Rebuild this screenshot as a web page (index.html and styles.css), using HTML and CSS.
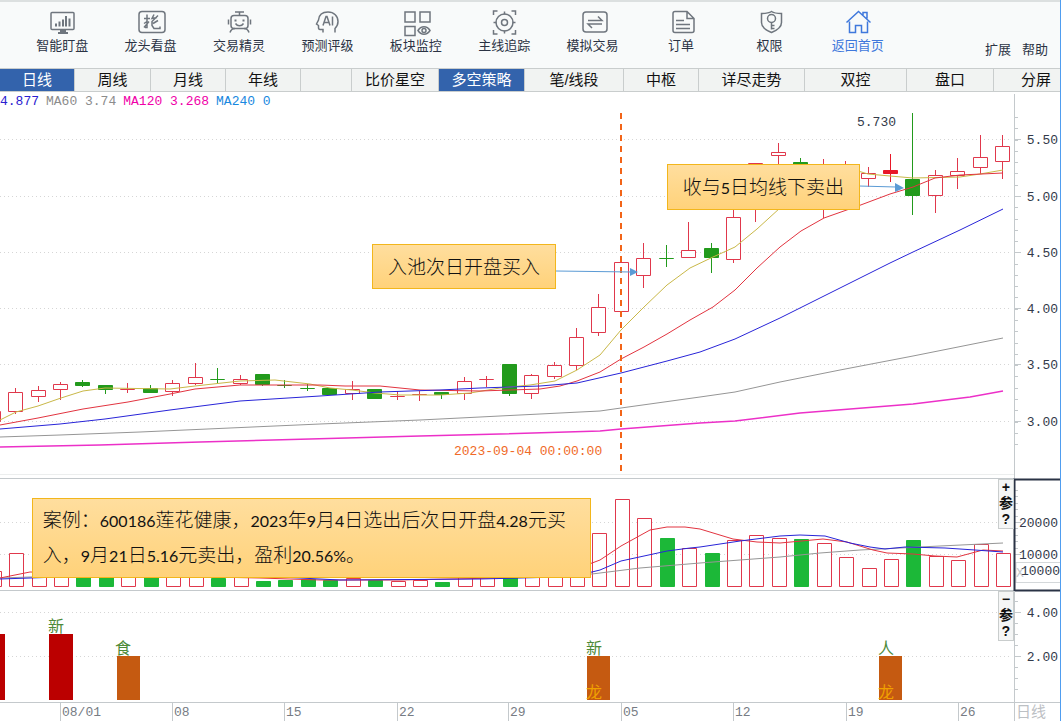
FILE: index.html
```html
<!DOCTYPE html>
<html lang="zh-CN">
<head>
<meta charset="utf-8">
<meta name="viewport" content="width=device-width, initial-scale=1">
<title>多空策略</title>
<link rel="stylesheet" href="styles.css">
</head>
<body>
<div class="app">
  <header class="toolbar">
    <nav class="tools">
      <button class="tool" type="button">
        <svg class="icon" viewBox="0 0 26 26"><rect x="2" y="3" width="23" height="17" rx="1"/><path d="M9 23.500h10M11 21.500h6" stroke-width="2"/><path d="M7 14v3M10.500 12v5M14 10v7M17 6.500V17M20.500 9v8" stroke-width="2"/></svg>
        智能盯盘
      </button>
      <button class="tool" type="button">
        <svg class="icon" viewBox="0 0 26 26"><rect x="1" y="2" width="26" height="21" rx="3"/><path d="M6 9h6M9 5v7l-3 2M11 12l-5 6M9 13v5H7M16 5l-2 4 5-1M20 6l-6 6v4l2 3h6v-2M15 14l5-3"/></svg>
        龙头看盘
      </button>
      <button class="tool" type="button">
        <svg class="icon" viewBox="0 0 26 26"><rect x="5" y="6" width="17" height="13" rx="3"/><path d="M9 2.500h9M13.500 2.500V6M2.500 10v5M24.500 10v5M4 23c1-3 3-4 5-4M23 23c-1-3-3-4-5-4M9.500 14c2 3 6 3 8 0"/><path d="M9.500 10v2M17.500 10v2" stroke-width="2"/></svg>
        交易精灵
      </button>
      <button class="tool" type="button">
        <svg class="icon" viewBox="0 0 26 26"><path d="M9 23v-3H6c-1 0-1.500-1-1.500-2v-2L2.500 14.500l2-4C5 5 9 2.500 14 2.500c6 0 10 4 10 9.500 0 3-1 5-3 7v4"/><path d="M9 16l3-9h1l3 9M10 13h5M18.500 7v9"/></svg>
        预测评级
      </button>
      <button class="tool" type="button">
        <svg class="icon" viewBox="0 0 26 26"><path d="M2 2.500h10v10H2zM17 2.500h10v10H17zM2 17h10v9H2zM15 21c3-5 9-5 12 0-3 5-9 5-12 0z"/><circle cx="21" cy="21" r="2"/></svg>
        板块监控
      </button>
      <button class="tool" type="button">
        <svg class="icon" viewBox="0 0 26 26"><circle cx="13.500" cy="13" r="8.500"/><circle cx="13.500" cy="13" r="3"/><path d="M13.500 2v3M13.500 21v3M2.500 13h3M21.500 13h3M2.500 5.500v-4h4M20.500 1.500h4v4M24.500 20.500v4h-4M6.500 24.500h-4v-4"/></svg>
        主线追踪
      </button>
      <button class="tool" type="button">
        <svg class="icon" viewBox="0 0 26 26"><rect x="3" y="2.500" width="24" height="20" rx="3"/><path d="M8 11h14l-4-4M22 14.500H8l4 4"/></svg>
        模拟交易
      </button>
      <button class="tool" type="button">
        <svg class="icon" viewBox="0 0 26 26"><path d="M7 2h12l7 7v12c0 1-1 2-2 2H7c-1 0-2-1-2-2V4c0-1 1-2 2-2zM19 2v7h7M8 11h8M8 15h14M8 19h14"/></svg>
        订单
      </button>
      <button class="tool" type="button">
        <svg class="icon" viewBox="0 0 26 26"><path d="M15.500 2c3 2 6 2 10 2v9c0 5-5 8-10 10-5-2-10-5-10-10V4c4 0 7 0 10-2z"/><circle cx="15.500" cy="9" r="4"/><path d="M15.500 13v7M15.500 16h3M15.500 19h3"/></svg>
        权限
      </button>
      <a class="tool tool-home" href="#">
        <svg class="icon" viewBox="0 0 26 26"><path d="M1.500 13L13.500 2l12 11M4.500 12v11h6v-7h6v7h6V12M18 5.500V3h4v6"/></svg>
        返回首页
      </a>
    </nav>
    <div class="extras">
      <button type="button">扩展</button>
      <button type="button">帮助</button>
    </div>
  </header>

  <nav class="tabs">
    <button class="tab active" type="button">日线</button>
    <button class="tab" type="button">周线</button>
    <button class="tab" type="button">月线</button>
    <button class="tab" type="button">年线</button>
    <span class="tab"></span>
    <button class="tab" type="button">比价星空</button>
    <button class="tab active" type="button">多空策略</button>
    <button class="tab" type="button">笔/线段</button>
    <button class="tab" type="button">中枢</button>
    <button class="tab" type="button">详尽走势</button>
    <button class="tab" type="button">双控</button>
    <button class="tab" type="button">盘口</button>
    <button class="tab tab-end" type="button">分屏</button>
  </nav>

  <main>
    <div class="legend">
      <span class="c-ma20">4.877</span>
      <span class="c-ma60">MA60 3.74</span>
      <span class="c-ma120">MA120 3.268</span>
      <span class="c-ma240">MA240 0</span>
    </div>

    <section class="panel price">
      <svg class="plot" viewBox="0 110 1060 369">
        <g id="price-grid"></g>
        <g id="candles"></g>
        <polyline class="line ma5" points="0,420 16,412 38,406 61,398 83,391 105,388 170,389 195,386 240,381 275,380 310,384 330,388 352,390 375,393 400,395 440,395 470,393 500,388 530,385 555,381 577,370 600,355 621,330 644,307 667,285 690,268 713,257 735,247 757,229 780,208 800,190 824,178 858,171 868,174 890,176 913,178 960,177 980,174 1003,170"/>
        <polyline class="line ma10" points="0,425 38,418 83,409 128,402 170,394 195,389 240,385 320,385 345,386 380,386 420,390 480,391 540,389 560,386 577,381 600,372 621,359 644,347 667,334 690,320 713,307 735,290 757,268 780,247 801,231 824,218 858,206 890,194 913,187 935,178 960,175 1003,173"/>
        <polyline class="line ma20" points="0,429 60,424 105,419 170,410 240,401 320,396 380,392 440,390 480,388 540,386 577,383 621,373 667,361 700,352 735,339 780,318 824,296 868,274 890,263 913,252 960,230 1003,209"/>
        <polyline class="line ma60" points="0,437 60,435 140,432 230,428 320,424 420,420 480,417 540,414 600,411 621,408 700,397 735,392 780,382 840,370 913,356 1003,338"/>
        <polyline class="line ma120" points="0,447 100,445 200,442 310,439 420,436 500,434 600,431 621,429 700,423 735,421 800,413 913,404 970,397 1003,391"/>
        <path class="marker" d="M621 113V472"/>
        <path class="arrow" d="M556 271L632 272M859 186L896 187"/>
        <path class="arrow-head" d="M630 268v8l8-4zM895 183v9l9-4z"/>
        <text class="num" x="857" y="126">5.730</text>
        <text class="num date" x="454" y="455">2023-09-04 00:00:00</text>
        <path class="edge" d="M1014.500 94V479M0 478.500H1014"/>
        <path class="edge faint" d="M0 474.500H1014"/>
      </svg>
      <div class="callout buy">入池次日开盘买入</div>
      <div class="callout sell">收与<span class="digits">5</span>日均线下卖出</div>
    </section>

    <section class="panel volume">
      <svg class="plot" viewBox="0 479 1060 112">
        <g id="volume-grid"></g>
        <g id="volumes"></g>
        <polyline class="line ma60" points="0,578 30,577 160,576 330,577 592,574 640,568 700,563 740,560 780,557 820,553 860,550 900,548 940,546 1003,543"/>
        <polyline class="line ma10" points="0,578 30,572 210,577 260,578 320,580 400,580 500,578 560,574 592,563 600,560 621,546 650,530 667,527 685,527 700,529 733,539 757,542 780,543 823,539 847,542 873,550 887,553 913,554 935,556 957,557 983,550 1003,551"/>
        <polyline class="line ma20" points="0,579 60,577 280,577 340,580 480,579 560,577 592,572 600,570 621,561 667,551 690,548 700,547 740,541 780,536 800,535 825,536 850,543 870,547 885,549 905,547 945,548 975,550 1003,552"/>
        <path class="edge" d="M0 590.500H1014"/>
        <rect class="unit-box" x="1016" y="562.500" width="46" height="20"/>
        <text class="num unit-x" x="1016" y="577">X</text>
        <text class="num" x="1021" y="575">10000</text>
        <rect class="axis-focus" x="1014.500" y="479.500" width="50" height="111"/>
      </svg>
      <div class="callout note">案例：<span class="digits">600186</span>莲花健康，<span class="digits">2023</span>年<span class="digits">9</span>月<span class="digits">4</span>日选出后次日开盘<span class="digits">4.28</span>元买入，<span class="digits">9</span>月<span class="digits">21</span>日<span class="digits">5.16</span>元卖出，盈利<span class="digits">20.56%</span>。</div>
      <div class="side">
        <button type="button">+</button>
        <button type="button">参</button>
        <button type="button">?</button>
      </div>
    </section>

    <section class="panel signal">
      <svg class="plot" viewBox="0 591 1060 112">
        <g id="signal-grid"></g>
        <path class="bar-red" d="M0 634h5v66H0zM49 634h24v66H49z"/>
        <path class="bar-orange" d="M117 656h23v44h-23zM587 656h23v44h-23zM879 656h23v44h-23z"/>
        <g class="tag">
          <text x="48" y="632">新</text>
          <text x="115" y="654">食</text>
          <text x="586" y="654">新</text>
          <text x="878" y="654">人</text>
        </g>
        <g class="tag dragon">
          <text x="586" y="698">龙</text>
          <text x="878" y="698">龙</text>
        </g>
        <path class="edge" d="M1014.500 591V703M0 702.500H1060"/>
      </svg>
      <div class="side">
        <button type="button">−</button>
        <button type="button">参</button>
        <button type="button">?</button>
      </div>
    </section>

    <svg class="plot" viewBox="0 703 1060 18">
      <g id="dates"></g>
      <path class="edge" d="M1014.500 703V721"/>
      <text class="period" x="1016" y="717">日线</text>
    </svg>
  </main>
</div>
<script src="chart.js"></script>
</body>
</html>
```

FILE: styles.css
```css
* { box-sizing: border-box; }

body {
  margin: 0;
  background: #fff;
  color: #2b3344;
  font-family: "Liberation Sans", "Noto Sans CJK SC", sans-serif;
}

button {
  margin: 0;
  padding: 0;
  border: 0;
  background: none;
  color: inherit;
  font: inherit;
}

.app {
  border-right: 1px solid #4f9df0;
  overflow: hidden;
}

/* Toolbar */
.toolbar {
  display: flex;
  height: 68px;
  padding-left: 18px;
  border-top: 2px solid #dce0e0;
  background: #f8fafa;
  font-size: 13px;
  line-height: 18px;
}

.tools {
  display: grid;
  flex: 1;
  grid-template-columns: repeat(10, 1fr);
}

.tool {
  display: flex;
  flex-direction: column;
  align-items: center;
  gap: 1px;
  padding-top: 7px;
  white-space: nowrap;
  text-decoration: none;
}

.tool-home { color: #3f78dc; }

.icon {
  width: 26px;
  height: 27px;
  overflow: visible;
  fill: none;
  stroke: #6f767e;
  stroke-width: 1.5;
}

.tool-home .icon { stroke: #3f78dc; }

.extras {
  display: flex;
  justify-content: flex-end;
  align-items: flex-start;
  gap: 11px;
  width: 158px;
  padding: 39px 12px 0 0;
}

/* Period and view tabs */
.tabs {
  display: grid;
  grid-template-columns: 75fr 76fr 75fr 75fr 51fr 87fr 86fr 99fr 75fr 106fr 102fr 87fr 66fr;
  height: 24px;
  border-top: 1px solid #c9cdcd;
  border-bottom: 1px solid #c9cdcd;
  background: #f1f3f2;
  color: #111;
  font-size: 15px;
  line-height: 22px;
}

.tab {
  border-right: 1px solid #c9cdcd;
  text-align: center;
  white-space: nowrap;
}

.tab.active {
  background: #3363ac;
  color: #fff;
}

.tab-end {
  padding-right: 9px;
  border-right: 0;
  text-align: right;
}

/* Moving average legend */
.legend {
  display: flex;
  gap: 7px;
  height: 18px;
  font: 13px/20px "Liberation Mono", monospace;
}

.c-ma20 { color: #2a20d0; }
.c-ma60 { color: #8c8c8c; }
.c-ma120 { color: #f000a8; }
.c-ma240 { color: #1888e0; }

/* Chart panels */
.panel { position: relative; }

.plot {
  display: block;
  width: 100%;
  overflow: visible;
}

.grid {
  fill: none;
  stroke: #d6d6d6;
  stroke-dasharray: 1 3;
}

.tick, .edge {
  fill: none;
  stroke: #c4c9cc;
}

.faint { stroke: #eceeee; }

.up {
  fill: #fff;
  stroke: #e0384c;
}

.up-solid {
  fill: #e81828;
  stroke: #e81828;
}

.down {
  fill: #229a1c;
  stroke: #229a1c;
}

.down-vol {
  fill: #1cb838;
  stroke: #1cb838;
}

.line {
  fill: none;
  stroke-width: 1;
}

.ma5 { stroke: #c9b848; }
.ma10 { stroke: #e23440; }
.ma20 { stroke: #2824d8; }
.ma60 { stroke: #969696; }

.ma120 {
  stroke: #ec30c8;
  stroke-width: 1.5;
}

.marker {
  stroke: #f26418;
  stroke-width: 2;
  stroke-dasharray: 6 5;
}

.arrow {
  fill: none;
  stroke: #5b9bd5;
}

.arrow-head { fill: #5b9bd5; }

.num {
  fill: #333a4a;
  font: 13px "Liberation Mono", monospace;
}

.date { fill: #f06a28; }
.day { fill: #777c84; }
.unit-x { fill: #c4c8cc; }

.unit-box {
  fill: #fff;
  stroke: #d4d8da;
}

.axis-focus {
  fill: none;
  stroke: #2a3345;
  stroke-width: 2;
}

.bar-red { fill: #bb0000; }
.bar-orange { fill: #c55a11; }

.tag {
  fill: #4c8a38;
  font: 16px "Noto Sans CJK SC", sans-serif;
}

.dragon { fill: #f0a000; }

.period {
  fill: #bcc0c4;
  font: 15px "Noto Sans CJK SC", sans-serif;
}

/* Notes over the chart */
.callout {
  position: absolute;
  border: 1px solid #f2b61c;
  background: linear-gradient(#ffde9e, #ffd27a);
  color: #111;
  font: 300 19px/34px Lato, "Noto Sans CJK SC", sans-serif;
  white-space: nowrap;
}

.digits {
  font-size: 16px;
  font-weight: 400;
}

.buy, .sell { padding: 5px 15px 4px; }

.buy {
  top: 36.3%;
  left: 35.1%;
}

.sell {
  top: 14.6%;
  left: 62.9%;
}

.note {
  top: 17%;
  left: 3%;
  width: 52.8%;
  padding: 4px 10px;
  white-space: normal;
}

.side {
  position: absolute;
  top: 0;
  right: 46px;
  display: grid;
  grid-template-rows: repeat(3, 16px);
  width: 16px;
  border: 1px solid #c9cdcd;
  background: #f5f6f6;
  color: #111;
  font: bold 14px/15px "Liberation Mono", "Noto Sans CJK SC", monospace;
}
```

FILE: chart.js
```js
const STEP = 22.43;

function add(id, tag, attrs, text) {
  const el = document.createElementNS('http://www.w3.org/2000/svg', tag);
  for (const key in attrs) el.setAttribute(key, attrs[key]);
  if (text) el.textContent = text;
  document.getElementById(id).appendChild(el);
}

function axis(id, levels) {
  for (const [y, label] of levels) {
    add(id, 'path', { class: 'grid', d: `M0 ${y}.5H1012` });
    add(id, 'path', { class: 'tick', d: `M1015 ${y}.5h6` });
    add(id, 'text', { class: 'num', x: 1058, y: y + 5, 'text-anchor': 'end' }, label);
  }
}

function minorTicks(id, from, to, step) {
  for (let y = from; y < to; y += step) {
    add(id, 'path', { class: 'tick', d: `M1015 ${Math.round(y) + 0.5}h3` });
  }
}

// kind, body top, body bottom, high, low; one row per trading day
const candles = [
  ['up', 411, 421, 411, 421],
  ['up', 392, 411, 388, 414],
  ['up', 390, 396, 386, 402],
  ['up', 384, 389, 382, 400],
  ['down', 382, 385, 380, 387],
  ['down', 385, 389, 385, 394],
  ['up', 389, 389, 383, 393],
  ['down', 388, 392, 385, 392],
  ['up', 383, 391, 380, 396],
  ['up', 377, 383, 363, 385],
  ['down', 379, 379, 368, 384],
  ['up', 379, 383, 375, 385],
  ['down', 374, 384, 374, 386],
  ['down', 385, 385, 380, 388],
  ['down', 388, 388, 384, 391],
  ['down', 388, 394, 388, 394],
  ['up', 389, 393, 381, 400],
  ['down', 389, 398, 389, 398],
  ['up', 396, 396, 391, 400],
  ['up', 394, 394, 391, 401],
  ['down', 392, 394, 392, 399],
  ['up', 381, 393, 377, 400],
  ['up', 379, 379, 376, 387],
  ['down', 364, 393, 364, 396],
  ['up', 375, 393, 374, 399],
  ['up', 365, 376, 362, 379],
  ['up', 337, 365, 328, 370],
  ['up', 307, 332, 294, 336],
  ['up', 262, 311, 262, 311],
  ['up', 258, 275, 243, 288],
  ['down', 258, 258, 245, 267],
  ['up', 250, 257, 222, 258],
  ['down', 248, 257, 243, 273],
  ['up', 217, 259, 205, 263],
  ['up', 163, 200, 163, 222],
  ['up', 152, 155, 143, 175],
  ['down', 162, 175, 158, 175],
  ['up', 180, 200, 159, 218],
  ['up', 175, 190, 161, 195],
  ['up', 173, 178, 167, 187],
  ['up-solid', 170, 173, 154, 182],
  ['down', 179, 195, 113, 215],
  ['up', 175, 195, 170, 213],
  ['up', 171, 175, 158, 189],
  ['up', 157, 167, 135, 174],
  ['up', 146, 161, 135, 179]
];

// top of each volume bar, in the same order as the candles
const volumes = [
  571, 553, 565, 568, 572, 574, 574, 574, 570, 572, 578, 577, 581, 580, 579,
  580, 578, 580, 581, 580, 582, 576, 576, 570, 570, 572, 572, 533, 499, 518,
  538, 548, 553, 540, 535, 538, 539, 543, 557, 568, 559, 540, 556, 560, 544, 553
];
const VOLUME_BASE = 586;

axis('price-grid', [[139, '5.50'], [196, '5.00'], [252, '4.50'], [308, '4.00'], [364, '3.50'], [421, '3.00']]);
minorTicks('price-grid', 117, 450, 11.28);
axis('volume-grid', [[522, '20000'], [554, '10000']]);
minorTicks('volume-grid', 490, 560, 6.4);
axis('signal-grid', [[612, '4.00'], [656, '2.00']]);
minorTicks('signal-grid', 601, 700, 11);

candles.forEach(([kind, top, bottom, high, low], i) => {
  const x = Math.round(15.2 + STEP * (i - 1)) + 0.5;
  add('candles', 'path', { class: kind, d: `M${x} ${high}V${top}M${x} ${bottom}V${low}` });
  add('candles', 'path', { class: kind, d: `M${x - 7} ${top + 0.5}h14V${bottom + 0.5}h-14z` });
  const volumeKind = kind === 'down' ? 'down-vol' : 'up';
  add('volumes', 'path', { class: volumeKind, d: `M${x - 6} ${volumes[i] + 0.5}h14V${VOLUME_BASE + 0.5}h-14z` });
});

[[60, '08/01'], [172, '08'], [284, '15'], [397, '22'], [508, '29'], [621, '05'], [733, '12'], [846, '19'], [958, '26']]
  .forEach(([x, label]) => {
    add('dates', 'path', { class: 'tick', d: `M${x}.5 703v18` });
    add('dates', 'text', { class: 'num day', x: x + 2, y: 716 }, label);
  });
```
